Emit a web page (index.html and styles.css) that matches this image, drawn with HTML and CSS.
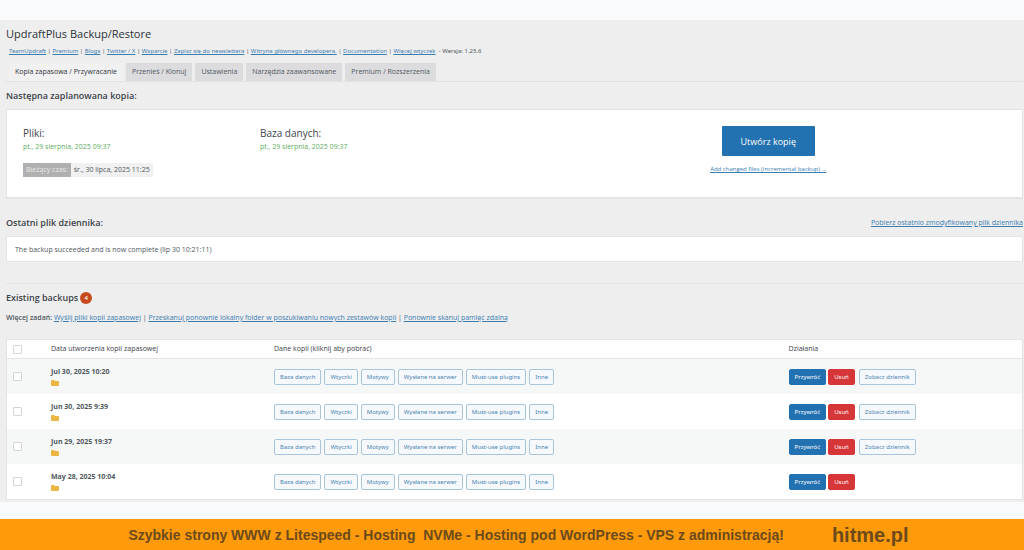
FILE: index.html
```html
<!DOCTYPE html>
<html lang="pl">
<head>
    <meta charset="UTF-8">
    <meta name="viewport" content="width=device-width, initial-scale=1.0">
    <title>UpdraftPlus Backup/Restore</title>
    <link rel="stylesheet" href="styles.css">
</head>
<body>
    <main class="wrap">
        <h1>UpdraftPlus Backup/Restore</h1>
        <p class="top-links">
            <a href="#">TeamUpdraft</a> | <a href="#">Premium</a> | <a href="#">Blogs</a> | <a href="#">Twitter / X</a> | <a href="#">Wsparcie</a> | <a href="#">Zapisz się do newslettera</a> | <a href="#">Witryna głównego developera.</a> | <a href="#">Documentation</a> | <a href="#">Więcej wtyczek</a> &nbsp;- Wersja: 1.25.6
        </p>

        <nav class="tabs">
            <a href="#" class="tab tab-active">Kopia zapasowa / Przywracanie</a>
            <a href="#" class="tab">Przenieś / Klonuj</a>
            <a href="#" class="tab">Ustawienia</a>
            <a href="#" class="tab">Narzędzia zaawansowane</a>
            <a href="#" class="tab">Premium / Rozszerzenia</a>
        </nav>

        <!-- Następna kopia -->
        <h2>Następna zaplanowana kopia:</h2>
        <section class="box next-backup">
            <div class="schedule">
                <div>
                    <h3>Pliki:</h3>
                    <p class="date">pt., 29 sierpnia, 2025 09:37</p>
                </div>
                <div>
                    <h3>Baza danych:</h3>
                    <p class="date">pt., 29 sierpnia, 2025 09:37</p>
                </div>
                <p class="time"><span class="time-label">Bieżący czas:</span><span class="time-value">śr., 30 lipca, 2025 11:25</span></p>
            </div>
            <div class="backup-now">
                <button type="button" class="btn-big">Utwórz kopię</button>
                <a href="#">Add changed files (incremental backup) ...</a>
            </div>
        </section>

        <!-- Dziennik -->
        <div class="log-head">
            <h2>Ostatni plik dziennika:</h2>
            <a href="#">Pobierz ostatnio zmodyfikowany plik dziennika</a>
        </div>
        <p class="box log">The backup succeeded and is now complete (lip 30 10:21:11)</p>

        <!-- Lista kopii -->
        <section class="existing">
            <h2>Existing backups <span class="count">4</span></h2>
            <p class="tasks"><strong>Więcej zadań:</strong> <a href="#">Wyślij pliki kopii zapasowej</a> | <a href="#">Przeskanuj ponownie lokalny folder w poszukiwaniu nowych zestawów kopii</a> | <a href="#">Ponownie skanuj pamięć zdalną</a></p>
            <table>
                <thead>
                    <tr>
                        <th class="col-check"><input type="checkbox" aria-label="Zaznacz wszystkie"></th>
                        <th class="col-date">Data utworzenia kopii zapasowej</th>
                        <th>Dane kopii (kliknij aby pobrać)</th>
                        <th class="col-actions">Działania</th>
                    </tr>
                </thead>
                <tbody>
                    <tr>
                        <td class="col-check"><input type="checkbox" aria-label="Jul 30, 2025 10:20"></td>
                        <td class="backup-date">Jul 30, 2025 10:20
                            <svg class="folder" viewBox="0 0 8 6"><path d="M0 1Q0 0 1 0H3L4 1H7Q8 1 8 2V5Q8 6 7 6H1Q0 6 0 5Z"/></svg>
                        </td>
                        <td>
                            <div class="buttons">
                                <button type="button">Baza danych</button>
                                <button type="button">Wtyczki</button>
                                <button type="button">Motywy</button>
                                <button type="button">Wysłane na serwer</button>
                                <button type="button">Must-use plugins</button>
                                <button type="button">Inne</button>
                            </div>
                        </td>
                        <td>
                            <div class="buttons actions">
                                <button type="button" class="restore">Przywróć</button>
                                <button type="button" class="delete">Usuń</button>
                                <button type="button" class="show-log">Zobacz dziennik</button>
                            </div>
                        </td>
                    </tr>
                    <tr>
                        <td class="col-check"><input type="checkbox" aria-label="Jun 30, 2025 9:39"></td>
                        <td class="backup-date">Jun 30, 2025 9:39
                            <svg class="folder" viewBox="0 0 8 6"><path d="M0 1Q0 0 1 0H3L4 1H7Q8 1 8 2V5Q8 6 7 6H1Q0 6 0 5Z"/></svg>
                        </td>
                        <td>
                            <div class="buttons">
                                <button type="button">Baza danych</button>
                                <button type="button">Wtyczki</button>
                                <button type="button">Motywy</button>
                                <button type="button">Wysłane na serwer</button>
                                <button type="button">Must-use plugins</button>
                                <button type="button">Inne</button>
                            </div>
                        </td>
                        <td>
                            <div class="buttons actions">
                                <button type="button" class="restore">Przywróć</button>
                                <button type="button" class="delete">Usuń</button>
                                <button type="button" class="show-log">Zobacz dziennik</button>
                            </div>
                        </td>
                    </tr>
                    <tr>
                        <td class="col-check"><input type="checkbox" aria-label="Jun 29, 2025 19:37"></td>
                        <td class="backup-date">Jun 29, 2025 19:37
                            <svg class="folder" viewBox="0 0 8 6"><path d="M0 1Q0 0 1 0H3L4 1H7Q8 1 8 2V5Q8 6 7 6H1Q0 6 0 5Z"/></svg>
                        </td>
                        <td>
                            <div class="buttons">
                                <button type="button">Baza danych</button>
                                <button type="button">Wtyczki</button>
                                <button type="button">Motywy</button>
                                <button type="button">Wysłane na serwer</button>
                                <button type="button">Must-use plugins</button>
                                <button type="button">Inne</button>
                            </div>
                        </td>
                        <td>
                            <div class="buttons actions">
                                <button type="button" class="restore">Przywróć</button>
                                <button type="button" class="delete">Usuń</button>
                                <button type="button" class="show-log">Zobacz dziennik</button>
                            </div>
                        </td>
                    </tr>
                    <tr>
                        <td class="col-check"><input type="checkbox" aria-label="May 28, 2025 10:04"></td>
                        <td class="backup-date">May 28, 2025 10:04
                            <svg class="folder" viewBox="0 0 8 6"><path d="M0 1Q0 0 1 0H3L4 1H7Q8 1 8 2V5Q8 6 7 6H1Q0 6 0 5Z"/></svg>
                        </td>
                        <td>
                            <div class="buttons">
                                <button type="button">Baza danych</button>
                                <button type="button">Wtyczki</button>
                                <button type="button">Motywy</button>
                                <button type="button">Wysłane na serwer</button>
                                <button type="button">Must-use plugins</button>
                                <button type="button">Inne</button>
                            </div>
                        </td>
                        <td>
                            <div class="buttons actions">
                                <button type="button" class="restore">Przywróć</button>
                                <button type="button" class="delete">Usuń</button>
                            </div>
                        </td>
                    </tr>
                </tbody>
            </table>
        </section>
    </main>

    <footer class="banner">
        <span>Szybkie strony WWW z Litespeed - Hosting &nbsp;NVMe - Hosting pod WordPress - VPS z administracją!</span>
        <strong>hitme.pl</strong>
    </footer>
</body>
</html>
```
FILE: styles.css
```css
* {
    box-sizing: border-box;
}
body {
    margin: 0;
    padding-top: 20px;
    background-color: #f9fafc;
    color: #50575e;
    font-family: "Open Sans", "Noto Sans", sans-serif;
    font-size: 7px;
    line-height: 10px;
}
h1, h2, h3, p {
    margin: 0;
}
a {
    color: #3a7db1;
}
.wrap {
    padding: 6px 1px 2px 6px;
    background-color: #eeeeee;
}
h1 {
    font-size: 11px;
    font-weight: 400;
    line-height: 16px;
    color: #2c3338;
}
h2 {
    font-size: 9px;
    font-weight: 600;
    line-height: 12px;
    color: #3c434a;
}
.top-links {
    padding: 4px 3px 7px;
    font-family: "Noto Sans", sans-serif;
    font-size: 6px;
}
/* Zakładki */
.tabs {
    display: flex;
    gap: 3px;
    padding-left: 3px;
    margin-bottom: 8px;
    border-bottom: 1px solid #e2e2e2;
}
.tab {
    padding: 0 6px;
    background-color: #dcdcde;
    color: #50575e;
    line-height: 18px;
    text-decoration: none;
}
.tab-active {
    background-color: #f1f1f1;
    color: #2c3338;
    font-weight: 500;
}
.box {
    background-color: #fff;
    border: 1px solid #e4e4e4;
}
.next-backup {
    display: grid;
    grid-template-columns: 1fr 1fr;
    margin: 7px 0 18px;
    padding: 16px 0 20px;
    border-bottom-width: 2px;
}
.schedule {
    display: grid;
    grid-template-columns: 237px 1fr;
    row-gap: 9px;
    padding-left: 16px;
}
h3 {
    font-size: 10px;
    font-weight: 500;
    line-height: 14px;
    color: #3c434a;
}
.date {
    color: #5cad5c;
    line-height: 14px;
}
.time {
    display: flex;
    grid-column: 1 / 3;
    line-height: 14px;
}
.time-label {
    padding: 0 3px;
    background-color: #b0b0b0;
    color: #e8e8e8;
}
.time-value {
    padding: 0 3px;
    background-color: #f1f1f1;
}
.backup-now {
    display: flex;
    flex-direction: column;
    align-items: center;
    gap: 8px;
    font-size: 6px;
}
.btn-big {
    width: 93px;
    height: 30px;
    border: 0;
    border-radius: 1px;
    background-color: #2271b1;
    color: #fff;
    font-family: inherit;
    font-size: 9px;
}
.log-head {
    display: flex;
    justify-content: space-between;
    align-items: center;
    margin-bottom: 7px;
}
.log {
    padding: 8px 8px 6px;
}
.existing {
    margin-top: 21px;
    padding-top: 8px;
    border-top: 1px solid #e4e4e4;
}
.existing h2 {
    display: flex;
    gap: 2px;
}
.count {
    min-width: 12px;
    border-radius: 6px;
    background-color: #ca4a1f;
    color: #fff;
    font-size: 6px;
    text-align: center;
}
.tasks {
    padding: 9px 0 16px;
}
.tasks strong {
    font-weight: 600;
}
/* Tabela kopii */
table {
    width: 100%;
    border: 1px solid #e4e4e4;
    border-collapse: separate;
    border-spacing: 0;
    background-color: #fff;
    table-layout: fixed;
}
th {
    height: 19px;
    padding: 0;
    border-bottom: 1px solid #e4e4e4;
    color: #3c434a;
    font-weight: 500;
    text-align: left;
}
td {
    height: 35px;
    padding: 0;
}
tbody tr:nth-child(odd) {
    background-color: #f6f7f7;
}
.col-check {
    width: 44px;
    padding-left: 6px;
}
.col-date {
    width: 223px;
}
.col-actions {
    width: 23%;
}
input[type="checkbox"] {
    display: block;
    width: 9px;
    height: 9px;
    margin: 0;
    appearance: none;
    border: 1px solid #d3d5d7;
    border-radius: 1px;
    background-color: #fff;
}
.backup-date {
    font-weight: 700;
}
.folder {
    display: block;
    width: 8px;
    height: 6px;
    margin-top: 3px;
    fill: #ecb440;
}
.buttons {
    display: flex;
    gap: 3px;
}
.buttons button {
    height: 16px;
    padding: 0 5px;
    border: 1px solid #a9c5dc;
    border-radius: 2px;
    background-color: #f6f9fb;
    color: #4a83b3;
    font-family: "Noto Sans", sans-serif;
    font-size: 6px;
}
.actions {
    gap: 2px;
}
.buttons .restore {
    border-color: #2271b1;
    background-color: #2271b1;
    color: #fff;
}
.buttons .delete {
    border-color: #d63638;
    background-color: #d63638;
    color: #fff;
}
.buttons .show-log {
    margin-left: 2px;
}
/* Pasek reklamowy */
.banner {
    display: flex;
    justify-content: center;
    align-items: center;
    gap: 48px;
    height: 31px;
    margin-top: 17px;
    padding-left: 13px;
    background-color: #ff9a0a;
    color: #6b4a1c;
    font-family: "Liberation Sans", Arial, sans-serif;
    font-size: 14px;
    font-weight: 700;
}
.banner strong {
    font-size: 20px;
}
```
